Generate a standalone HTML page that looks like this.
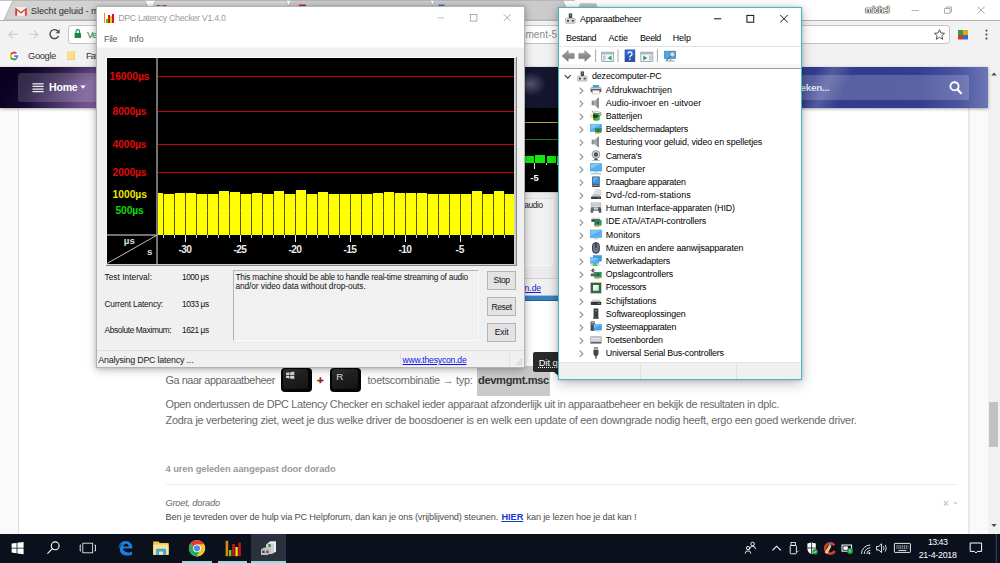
<!DOCTYPE html>
<html><head><meta charset="utf-8"><title>screenshot</title>
<style>
html,body{margin:0;padding:0;}
body{width:1000px;height:563px;overflow:hidden;position:relative;background:#fff;font-family:"Liberation Sans",sans-serif;}
.b{position:absolute;box-sizing:border-box;}
.t{position:absolute;white-space:nowrap;font-family:"Liberation Sans",sans-serif;}
svg{position:absolute;overflow:visible;}
</style></head><body>
<div class="b" style="left:0px;top:0px;width:1000px;height:20px;background:#ffffff;"></div>
<svg style="left:0;top:0" width="1000" height="21" viewBox="0 0 1000 21"><defs><linearGradient id="tg" x1="0" y1="0" x2="0" y2="1"><stop offset="0" stop-color="#d4d4d4"/><stop offset="1" stop-color="#e6e6e6"/></linearGradient></defs><path d="M146.8 19.8 L156 0 L285.5 0 L294.7 19.8 Z" fill="url(#tg)" stroke="#b0b0b0" stroke-width="0.8"/><path d="M282.3 19.8 L291.5 0 L429.8 0 L439 19.8 Z" fill="#cbcbcb" stroke="#adadad" stroke-width="0.8"/><path d="M425.8 19.8 L435 0 L562.5 0 L571.7 19.8 Z" fill="#cbcbcb" stroke="#adadad" stroke-width="0.8"/><path d="M4 19.8 L13.2 0 L144.6 0 L153.8 19.8 Z" fill="#d2d2d2" stroke="#b0b0b0" stroke-width="0.8"/><path d="M0 0.4 H575" stroke="#b4b4b4" stroke-width="0.9"/><path d="M578 9 L580 3.2 L596 3.2 L598.5 9 Z" fill="#c4c4c4"/><rect x="156.6" y="5.2" width="4" height="2.4" fill="#c62828"/><rect x="162.4" y="5.2" width="4.4" height="2.4" fill="#c62828"/><rect x="299" y="4.5" width="7" height="3" fill="#c62828"/><rect x="438.5" y="4.5" width="6" height="3" fill="#3b78d8"/></svg>
<svg style="left:14.6px;top:7px" width="12" height="9" viewBox="0 0 12 9"><rect x="0.3" y="0.3" width="11.4" height="8.4" fill="#f3f3f3"/><path d="M0.2 8.8 V0.4 L6 4.9 L11.8 0.4 V8.8 H9.9 V3.6 L6 6.7 L2.1 3.6 V8.8 Z" fill="#d8402f"/></svg>
<span class="t " style="left:30.80px;top:5px;font-size:9.3px;line-height:12.09px;color:#2f2f2f;letter-spacing:-0.074px;">Slecht geluid - m</span>
<span class="t " style="left:865.50px;top:5px;font-size:8.4px;line-height:10.92px;color:#fff;letter-spacing:-0.518px;font-weight:bold;text-shadow:0 0 0.8px #111,0 0 0.8px #111,0 0 1px #222,0 0 1.2px #333;">michel</span>
<svg style="left:900px;top:0" width="100" height="21" viewBox="0 0 100 21"><path d="M11.5 10.5 H19" stroke="#b0b0b0" stroke-width="0.9"/><path d="M44.5 8.5 H50 V13.3 H44.5 Z M46 8.5 V7 H51.5 V11.8 H50" fill="none" stroke="#999" stroke-width="0.8"/><path d="M77.8 6.7 L84.6 13.5 M84.6 6.7 L77.8 13.5" stroke="#999" stroke-width="0.9"/></svg>
<div class="b" style="left:0px;top:19.6px;width:1000px;height:47.4px;background:#f2f2f2;border-top:1.2px solid #b2b2b2;"></div>
<div class="b" style="left:67.5px;top:24.6px;width:882px;height:19.6px;background:#ffffff;border:1px solid #c6c6c6;border-radius:3px;"></div>
<svg style="left:0;top:21px" width="1000" height="27" viewBox="0 21 1000 27"><path d="M17.5 34.4 H9 M12.8 30.6 L9 34.4 L12.8 38.2" fill="none" stroke="#cfcfcf" stroke-width="1.3"/><path d="M29 34.4 H37.8 M34 30.6 L37.8 34.4 L34 38.2" fill="none" stroke="#cfcfcf" stroke-width="1.3"/><path d="M58 31.3 A4.5 4.5 0 1 0 58.6 36" fill="none" stroke="#4a4a4a" stroke-width="1.4"/><path d="M59.6 29.3 V33.2 H55.7 Z" fill="#4a4a4a"/><rect x="74.6" y="33" width="6.4" height="5" rx="0.6" fill="#1a8a3c"/><path d="M76 33 V31.4 A1.8 1.8 0 0 1 79.6 31.4 V33" fill="none" stroke="#1a8a3c" stroke-width="1.1"/><path d="M939.5 29.6 L941 33 L944.6 33.3 L941.9 35.7 L942.7 39.3 L939.5 37.4 L936.3 39.3 L937.1 35.7 L934.4 33.3 L938 33 Z" fill="none" stroke="#555" stroke-width="1"/><rect x="958" y="30" width="5" height="5" fill="#2e9e3e"/><rect x="963" y="30" width="5" height="5" fill="#e8a21c"/><rect x="958" y="35" width="5" height="4.5" fill="#d63a2a"/><rect x="963" y="35" width="5" height="4.5" fill="#2f6fc9"/><circle cx="986.5" cy="30.6" r="1.1" fill="#555"/><circle cx="986.5" cy="34.6" r="1.1" fill="#555"/><circle cx="986.5" cy="38.6" r="1.1" fill="#555"/></svg>
<span class="t " style="left:87.00px;top:29px;font-size:9.5px;line-height:12.35px;color:#1a8a3c;letter-spacing:-0.748px;">Ve</span>
<span class="t " style="left:525.40px;top:28px;font-size:10px;line-height:13.0px;color:#8a8a8a;letter-spacing:0.113px;">ment-5</span>
<svg style="left:8.6px;top:50.6px" width="10" height="10" viewBox="0 0 10 10"><circle cx="5" cy="5" r="5.2" fill="#fff"/><path d="M5 0.6 A4.4 4.4 0 0 0 1.2 2.8 L2.9 4.1 A2.4 2.4 0 0 1 5 2.6 Z" fill="#ea4335"/><path d="M1.2 2.8 A4.4 4.4 0 0 0 1.2 7.2 L2.9 5.9 A2.4 2.4 0 0 1 2.9 4.1 Z" fill="#fbbc05"/><path d="M1.2 7.2 A4.4 4.4 0 0 0 8 8.2 L6.5 6.9 A2.4 2.4 0 0 1 2.9 5.9 Z" fill="#34a853"/><path d="M8 8.2 A4.4 4.4 0 0 0 9.3 4.2 H5 V5.9 H7.3 A2.4 2.4 0 0 1 6.5 6.9 Z" fill="#4285f4"/><path d="M5 0.6 A4.4 4.4 0 0 1 8.1 1.9 L6.8 3.2 A2.4 2.4 0 0 0 5 2.6 Z" fill="#ea4335"/></svg>
<span class="t " style="left:28.00px;top:50px;font-size:9.3px;line-height:12.09px;color:#333;letter-spacing:-0.331px;">Google</span>
<div class="b" style="left:66.6px;top:50.6px;width:8.4px;height:9.8px;background:#fbe08c;border-radius:1px;border-right:1px solid #f3cf60;border-bottom:1px solid #f3cf60;"></div>
<span class="t " style="left:86.00px;top:50px;font-size:9.3px;line-height:12.09px;color:#333;letter-spacing:-0.834px;">Fav</span>
<div class="b" style="left:0px;top:66.5px;width:988px;height:467.5px;background:#fafafa;"></div>
<div class="b" style="left:17.7px;top:107px;width:952.3px;height:427px;background:#ffffff;border-left:1px solid #dedede;border-right:2px solid #e9e9e9;"></div>
<div class="b" style="left:988px;top:66.5px;width:12px;height:467.5px;background:#f1f1f1;"></div>
<div class="b" style="left:989.3px;top:402px;width:9.2px;height:45px;background:#c1c1c1;"></div>
<svg style="left:988px;top:66px" width="12" height="468" viewBox="0 0 12 468"><path d="M3.2 9.6 L6 6.6 L8.8 9.6 Z" fill="#505050"/><path d="M3.2 458 L6 461 L8.8 458 Z" fill="#505050"/></svg>
<div class="b" style="left:0px;top:66.5px;width:988px;height:41px;background:linear-gradient(90deg,#0b0326 0%,#150a33 2.5%,#3d2a5c 5%,#6b4c8c 8%,#7c5d9c 10%,#4a3a78 20%,#1f1c45 45%,#15153a 54%,#20204a 57%,#303a8a 70%,#323c8d 82%,#343e8f 93%,#4a54a0 97%,#6d77b5 100%);box-shadow:0 1px 3px rgba(0,0,0,.35);"></div>
<div class="b" style="left:0px;top:66.5px;width:100px;height:41px;background:linear-gradient(160deg,rgba(8,0,30,.85) 0%,rgba(8,0,30,.55) 30%,rgba(8,0,30,0) 62%);"></div>
<div class="b" style="left:524px;top:66.5px;width:34px;height:41px;background:radial-gradient(ellipse 16px 12px at 6px 17px,rgba(110,108,135,.75),rgba(20,20,50,0) 100%),#15152f;"></div>
<div class="b" style="left:802px;top:66.5px;width:186px;height:41px;background:linear-gradient(115deg,rgba(255,255,255,0) 0%,rgba(255,255,255,0) 8%,rgba(255,255,255,.16) 16%,rgba(255,255,255,0) 26%,rgba(255,255,255,0) 100%);"></div>
<div class="b" style="left:18.2px;top:73px;width:120px;height:29px;background:rgba(255,255,255,.16);border-radius:3px;"></div>
<svg style="left:32px;top:82px" width="14" height="12" viewBox="0 0 14 12"><path d="M0.5 1.8 H11.6 M0.5 4.4 H11.6 M0.5 7 H11.6 M0.5 9.6 H11.6" stroke="#f2eef8" stroke-width="1.25"/></svg>
<span class="t " style="left:49.00px;top:81px;font-size:10.6px;line-height:13.78px;color:#ffffff;letter-spacing:-0.237px;font-weight:bold;">Home</span>
<svg style="left:80px;top:85.4px" width="8" height="5" viewBox="0 0 8 5"><path d="M0.3 0.5 H5.7 L3 3.8 Z" fill="#fff"/></svg>
<div class="b" style="left:700px;top:75px;width:269px;height:24.6px;background:rgba(255,255,255,.19);border-radius:2px;"></div>
<span class="t " style="left:800.50px;top:82px;font-size:9.8px;line-height:12.74px;color:#dfe2f3;letter-spacing:-0.215px;font-weight:bold;">eken...</span>
<svg style="left:948px;top:80px" width="16" height="16" viewBox="0 0 16 16"><circle cx="6.5" cy="6.3" r="4.1" fill="none" stroke="#fff" stroke-width="1.9"/><path d="M9.6 9.6 L13 13.2" stroke="#fff" stroke-width="2.2" stroke-linecap="round"/></svg>
<div class="b" style="left:500px;top:107.5px;width:60px;height:85px;background:#000000;"></div>
<div class="b" style="left:500px;top:122px;width:60px;height:1px;background:#b8a64a;"></div>
<div class="b" style="left:500px;top:138.6px;width:60px;height:1.2px;background:#2c7a2c;"></div>
<div class="b" style="left:524px;top:155.8px;width:9.8px;height:7px;background:#10e810;"></div>
<div class="b" style="left:535px;top:154.7px;width:10.4px;height:8.1px;background:#10e810;"></div>
<div class="b" style="left:546.6px;top:155.8px;width:9.8px;height:7px;background:#10e810;"></div>
<div class="b" style="left:557.4px;top:155.8px;width:3px;height:7px;background:#10e810;"></div>
<div class="b" style="left:534.3px;top:162.8px;width:0.9px;height:6.6px;background:#e8e8e8;"></div>
<div class="b" style="left:545.6px;top:162.8px;width:0.8px;height:2.6px;background:#d0d0d0;"></div>
<div class="b" style="left:556.6px;top:162.8px;width:0.8px;height:2.6px;background:#d0d0d0;"></div>
<span class="t " style="left:530.30px;top:172px;font-size:9.3px;line-height:12.09px;color:#ffffff;letter-spacing:0.116px;font-weight:bold;">-5</span>
<div class="b" style="left:500px;top:192px;width:60px;height:104px;background:#ececec;border-top:1px solid #cfcfcf;"></div>
<div class="b" style="left:500px;top:198.4px;width:53px;height:68px;background:#f1f1f1;border:1px solid #dcdcdc;border-right-color:#f8f8f8;border-bottom-color:#f8f8f8;"></div>
<span class="t " style="left:524.30px;top:200px;font-size:8.3px;line-height:10.79px;color:#222;letter-spacing:-0.361px;">audio</span>
<div class="b" style="left:500px;top:277.5px;width:60px;height:18px;background:#f0f0f0;border-top:1px solid #d4d4d4;"></div>
<span class="t " style="left:524.60px;top:283px;font-size:8.6px;line-height:11.18px;color:#1a1ad8;letter-spacing:-0.059px;text-decoration:underline;">n.de</span>
<div class="b" style="left:500px;top:295.3px;width:60px;height:5.8px;background:#3c7fc0;border-top:1px solid #9fbfe0;border-bottom:1px solid #2a5f98;"></div>
<span class="t " style="left:165.50px;top:373px;font-size:10.9px;line-height:14.17px;color:#696969;letter-spacing:-0.449px;">Ga naar apparaatbeheer</span>
<div class="b" style="left:280.5px;top:368.4px;width:31.4px;height:24px;background:#050505;border-radius:4px;"></div>
<div class="b" style="left:282.9px;top:369.2px;width:25.6px;height:19.6px;border-radius:3px;background:linear-gradient(165deg,#3a3a3a 0%,#222 35%,#141414 100%);"></div>
<div class="b" style="left:329.8px;top:368.4px;width:31.4px;height:24px;background:#050505;border-radius:4px;"></div>
<div class="b" style="left:332.2px;top:369.2px;width:25.6px;height:19.6px;border-radius:3px;background:linear-gradient(165deg,#3a3a3a 0%,#222 35%,#141414 100%);"></div>
<svg style="left:286.4px;top:371.8px" width="9.2" height="6.9" viewBox="0 0 8 6"><path d="M0 0.7 L3 0.2 V2.6 H0 Z M3.6 0.15 L7.2 -0.4 V2.6 H3.6 Z M0 3.2 H3 V5.6 L0 5.1 Z M3.6 3.2 H7.2 V6.2 L3.6 5.7 Z" fill="#d8d8d8"/></svg>
<span class="t " style="left:336.20px;top:371px;font-size:9.8px;line-height:12.74px;color:#dcdcdc;">R</span>
<span class="t " style="left:317.00px;top:372px;font-size:11.6px;line-height:15.08px;color:#a31515;font-weight:bold;-webkit-text-stroke:0.3px #a31515;">+</span>
<span class="t " style="left:367.60px;top:373px;font-size:10.9px;line-height:14.17px;color:#696969;letter-spacing:-0.266px;">toetscombinatie → typ:</span>
<div class="b" style="left:476.5px;top:366px;width:73px;height:29.5px;background:#c9c9c9;"></div>
<span class="t " style="left:478.00px;top:373px;font-size:11.2px;line-height:14.56px;color:#333;letter-spacing:-0.392px;font-weight:bold;">devmgmt.msc</span>
<span class="t " style="left:165.50px;top:397px;font-size:10.9px;line-height:14.17px;color:#696969;letter-spacing:-0.331px;">Open ondertussen de DPC Latency Checker en schakel ieder apparaat afzonderlijk uit in apparaatbeheer en bekijk de resultaten in dplc.</span>
<span class="t " style="left:165.50px;top:413px;font-size:10.9px;line-height:14.17px;color:#696969;letter-spacing:-0.265px;">Zodra je verbetering ziet, weet je dus welke driver de boosdoener is en welk een update of een downgrade nodig heeft, ergo een goed werkende driver.</span>
<span class="t " style="left:165.50px;top:463px;font-size:9.4px;line-height:12.22px;color:#9a9a9a;letter-spacing:-0.080px;font-weight:bold;">4 uren geleden aangepast door dorado</span>
<div class="b" style="left:165.5px;top:483.9px;width:792px;height:1px;background:#eeeeee;"></div>
<span class="t " style="left:165.50px;top:498px;font-size:9.2px;line-height:11.96px;color:#666;letter-spacing:-0.174px;font-style:italic;">Groet, dorado</span>
<span class="t " style="left:165.50px;top:512px;font-size:9.2px;line-height:11.96px;color:#4e4e4e;letter-spacing:-0.161px;">Ben je tevreden over de hulp via PC Helpforum, dan kan je ons (vrijblijvend) steunen.</span>
<span class="t " style="left:501.40px;top:512px;font-size:9.2px;line-height:11.96px;color:#1a3ad6;letter-spacing:0.005px;font-weight:bold;text-decoration:underline;">HIER</span>
<span class="t " style="left:526.50px;top:512px;font-size:9.2px;line-height:11.96px;color:#4e4e4e;letter-spacing:-0.157px;">kan je lezen hoe je dat kan !</span>
<span class="t " style="left:943.00px;top:497px;font-size:10px;line-height:13.0px;color:#c8c8c8;font-weight:bold;">×</span>
<svg style="left:952.5px;top:502.4px" width="6" height="4" viewBox="0 0 6 4"><path d="M0.4 0.4 H4.8 L2.6 2.6 Z" fill="#c4c4c4"/></svg>
<div class="b" style="left:533px;top:352px;width:30px;height:20px;background:#2a2a2a;border-radius:2px;"></div>
<span class="t " style="left:538.80px;top:357px;font-size:9.4px;line-height:12.22px;color:#fff;letter-spacing:-0.065px;text-decoration:underline dotted;">Dit q</span>
<svg style="left:554px;top:371.5px" width="8" height="4" viewBox="0 0 8 4"><path d="M0 0 H8 L4 3.6 Z" fill="#2a2a2a"/></svg>
<div class="b" style="left:96px;top:6.2px;width:428.5px;height:361.4px;background:#f0f0f0;border:1px solid #b3b3b3;box-shadow:0 2px 9px rgba(0,0,0,.27),0 0 3px rgba(0,0,0,.15);"></div>
<div class="b" style="left:97px;top:7.2px;width:426.5px;height:39.6px;background:#ffffff;"></div>
<div class="b" style="left:103.6px;top:12.6px;width:1.9px;height:10.299999999999999px;background:#e0960c;"></div>
<div class="b" style="left:105.7px;top:19.2px;width:1.9px;height:3.6999999999999993px;background:#62c21e;"></div>
<div class="b" style="left:107.9px;top:14.8px;width:1.9px;height:8.099999999999998px;background:#d41616;"></div>
<div class="b" style="left:110.0px;top:16.4px;width:1.9px;height:6.5px;background:#e6cc18;"></div>
<div class="b" style="left:112.1px;top:14.0px;width:1.9px;height:8.899999999999999px;background:#d41616;"></div>
<span class="t " style="left:118.20px;top:13px;font-size:8.9px;line-height:11.57px;color:#9b9b9b;letter-spacing:-0.329px;">DPC Latency Checker V1.4.0</span>
<svg style="left:430px;top:8px" width="92" height="21" viewBox="430 8 92 21"><path d="M437.6 17.9 H444" stroke="#b5b5b5" stroke-width="0.9"/><rect x="470.3" y="14.5" width="6.6" height="6.6" fill="none" stroke="#9a9a9a" stroke-width="0.8"/><path d="M503.7 14.2 L510.7 21.2 M510.7 14.2 L503.7 21.2" stroke="#9a9a9a" stroke-width="0.85"/></svg>
<span class="t " style="left:104.10px;top:34px;font-size:8.9px;line-height:11.57px;color:#5a5a5a;letter-spacing:-0.335px;">File</span>
<span class="t " style="left:128.90px;top:34px;font-size:8.9px;line-height:11.57px;color:#5a5a5a;letter-spacing:0.014px;">Info</span>
<div class="b" style="left:97px;top:46.8px;width:426.5px;height:0.8px;background:#f8f8f8;"></div>
<div class="b" style="left:105.6px;top:56.6px;width:411.6px;height:209.3px;background:#858585;"></div>
<div class="b" style="left:105.6px;top:56.6px;width:410.5px;height:208.2px;background:#fbfbfb;"></div>
<div class="b" style="left:106.9px;top:57.9px;width:409.2px;height:206.9px;background:#cdcdcd;"></div>
<div class="b" style="left:106.9px;top:57.9px;width:407.4px;height:205.9px;background:#000000;"></div>
<div class="b" style="left:158px;top:75.95px;width:356.3px;height:1.15px;background:#cc0000;"></div>
<div class="b" style="left:158px;top:110.95px;width:356.3px;height:1.15px;background:#cc0000;"></div>
<div class="b" style="left:158px;top:143.95px;width:356.3px;height:1.15px;background:#cc0000;"></div>
<div class="b" style="left:158px;top:171.85px;width:356.3px;height:1.15px;background:#cc0000;"></div>
<div class="b" style="left:157.3px;top:193.3px;width:5.85px;height:41.29999999999998px;background:#ffff00;"></div>
<div class="b" style="left:164.05px;top:193.7px;width:10.1px;height:40.900000000000006px;background:#ffff00;"></div>
<div class="b" style="left:175.05px;top:192.7px;width:10.1px;height:41.900000000000006px;background:#ffff00;"></div>
<div class="b" style="left:186.05px;top:192.7px;width:10.1px;height:41.900000000000006px;background:#ffff00;"></div>
<div class="b" style="left:197.05px;top:193.5px;width:10.1px;height:41.099999999999994px;background:#ffff00;"></div>
<div class="b" style="left:208.05px;top:193.5px;width:10.1px;height:41.099999999999994px;background:#ffff00;"></div>
<div class="b" style="left:219.05px;top:191.2px;width:10.1px;height:43.400000000000006px;background:#ffff00;"></div>
<div class="b" style="left:230.05px;top:192.0px;width:10.1px;height:42.599999999999994px;background:#ffff00;"></div>
<div class="b" style="left:241.05px;top:193.5px;width:10.1px;height:41.099999999999994px;background:#ffff00;"></div>
<div class="b" style="left:252.05px;top:192.7px;width:10.1px;height:41.900000000000006px;background:#ffff00;"></div>
<div class="b" style="left:263.05px;top:194.2px;width:10.1px;height:40.400000000000006px;background:#ffff00;"></div>
<div class="b" style="left:274.05px;top:190.5px;width:10.1px;height:44.099999999999994px;background:#ffff00;"></div>
<div class="b" style="left:285.05px;top:194.2px;width:10.1px;height:40.400000000000006px;background:#ffff00;"></div>
<div class="b" style="left:296.05px;top:190.0px;width:10.1px;height:44.599999999999994px;background:#ffff00;"></div>
<div class="b" style="left:307.05px;top:193.5px;width:10.1px;height:41.099999999999994px;background:#ffff00;"></div>
<div class="b" style="left:318.05px;top:192.0px;width:10.1px;height:42.599999999999994px;background:#ffff00;"></div>
<div class="b" style="left:329.05px;top:193.5px;width:10.1px;height:41.099999999999994px;background:#ffff00;"></div>
<div class="b" style="left:340.05px;top:193.5px;width:10.1px;height:41.099999999999994px;background:#ffff00;"></div>
<div class="b" style="left:351.05px;top:193.5px;width:10.1px;height:41.099999999999994px;background:#ffff00;"></div>
<div class="b" style="left:362.05px;top:193.5px;width:10.1px;height:41.099999999999994px;background:#ffff00;"></div>
<div class="b" style="left:373.05px;top:192.7px;width:10.1px;height:41.900000000000006px;background:#ffff00;"></div>
<div class="b" style="left:384.05px;top:192.0px;width:10.1px;height:42.599999999999994px;background:#ffff00;"></div>
<div class="b" style="left:395.05px;top:193.3px;width:10.1px;height:41.29999999999998px;background:#ffff00;"></div>
<div class="b" style="left:406.05px;top:193.3px;width:10.1px;height:41.29999999999998px;background:#ffff00;"></div>
<div class="b" style="left:417.05px;top:193.3px;width:10.1px;height:41.29999999999998px;background:#ffff00;"></div>
<div class="b" style="left:428.05px;top:194.2px;width:10.1px;height:40.400000000000006px;background:#ffff00;"></div>
<div class="b" style="left:439.05px;top:193.5px;width:10.1px;height:41.099999999999994px;background:#ffff00;"></div>
<div class="b" style="left:450.05px;top:193.5px;width:10.1px;height:41.099999999999994px;background:#ffff00;"></div>
<div class="b" style="left:461.05px;top:193.5px;width:10.1px;height:41.099999999999994px;background:#ffff00;"></div>
<div class="b" style="left:472.05px;top:190.5px;width:10.1px;height:44.099999999999994px;background:#ffff00;"></div>
<div class="b" style="left:483.05px;top:194.2px;width:10.1px;height:40.400000000000006px;background:#ffff00;"></div>
<div class="b" style="left:494.05px;top:191.2px;width:10.1px;height:43.400000000000006px;background:#ffff00;"></div>
<div class="b" style="left:505.05px;top:193.5px;width:9.2px;height:41.099999999999994px;background:#ffff00;"></div>
<div class="b" style="left:163.05px;top:194.4px;width:0.9px;height:40.2px;background:#555500;"></div>
<div class="b" style="left:174.05px;top:194.4px;width:0.9px;height:40.2px;background:#555500;"></div>
<div class="b" style="left:185.05px;top:194.4px;width:0.9px;height:40.2px;background:#555500;"></div>
<div class="b" style="left:196.05px;top:194.4px;width:0.9px;height:40.2px;background:#555500;"></div>
<div class="b" style="left:207.05px;top:194.4px;width:0.9px;height:40.2px;background:#555500;"></div>
<div class="b" style="left:218.05px;top:194.4px;width:0.9px;height:40.2px;background:#555500;"></div>
<div class="b" style="left:229.05px;top:194.4px;width:0.9px;height:40.2px;background:#555500;"></div>
<div class="b" style="left:240.05px;top:194.4px;width:0.9px;height:40.2px;background:#555500;"></div>
<div class="b" style="left:251.05px;top:194.4px;width:0.9px;height:40.2px;background:#555500;"></div>
<div class="b" style="left:262.05px;top:194.4px;width:0.9px;height:40.2px;background:#555500;"></div>
<div class="b" style="left:273.05px;top:194.4px;width:0.9px;height:40.2px;background:#555500;"></div>
<div class="b" style="left:284.05px;top:194.4px;width:0.9px;height:40.2px;background:#555500;"></div>
<div class="b" style="left:295.05px;top:194.4px;width:0.9px;height:40.2px;background:#555500;"></div>
<div class="b" style="left:306.05px;top:194.4px;width:0.9px;height:40.2px;background:#555500;"></div>
<div class="b" style="left:317.05px;top:194.4px;width:0.9px;height:40.2px;background:#555500;"></div>
<div class="b" style="left:328.05px;top:194.4px;width:0.9px;height:40.2px;background:#555500;"></div>
<div class="b" style="left:339.05px;top:194.4px;width:0.9px;height:40.2px;background:#555500;"></div>
<div class="b" style="left:350.05px;top:194.4px;width:0.9px;height:40.2px;background:#555500;"></div>
<div class="b" style="left:361.05px;top:194.4px;width:0.9px;height:40.2px;background:#555500;"></div>
<div class="b" style="left:372.05px;top:194.4px;width:0.9px;height:40.2px;background:#555500;"></div>
<div class="b" style="left:383.05px;top:194.4px;width:0.9px;height:40.2px;background:#555500;"></div>
<div class="b" style="left:394.05px;top:194.4px;width:0.9px;height:40.2px;background:#555500;"></div>
<div class="b" style="left:405.05px;top:194.4px;width:0.9px;height:40.2px;background:#555500;"></div>
<div class="b" style="left:416.05px;top:194.4px;width:0.9px;height:40.2px;background:#555500;"></div>
<div class="b" style="left:427.05px;top:194.4px;width:0.9px;height:40.2px;background:#555500;"></div>
<div class="b" style="left:438.05px;top:194.4px;width:0.9px;height:40.2px;background:#555500;"></div>
<div class="b" style="left:449.05px;top:194.4px;width:0.9px;height:40.2px;background:#555500;"></div>
<div class="b" style="left:460.05px;top:194.4px;width:0.9px;height:40.2px;background:#555500;"></div>
<div class="b" style="left:471.05px;top:194.4px;width:0.9px;height:40.2px;background:#555500;"></div>
<div class="b" style="left:482.05px;top:194.4px;width:0.9px;height:40.2px;background:#555500;"></div>
<div class="b" style="left:493.05px;top:194.4px;width:0.9px;height:40.2px;background:#555500;"></div>
<div class="b" style="left:504.05px;top:194.4px;width:0.9px;height:40.2px;background:#555500;"></div>
<div class="b" style="left:163.0px;top:210.0px;width:1px;height:0.9px;background:#4fa000;"></div>
<div class="b" style="left:174.0px;top:210.0px;width:1px;height:0.9px;background:#4fa000;"></div>
<div class="b" style="left:185.0px;top:210.0px;width:1px;height:0.9px;background:#4fa000;"></div>
<div class="b" style="left:196.0px;top:210.0px;width:1px;height:0.9px;background:#4fa000;"></div>
<div class="b" style="left:207.0px;top:210.0px;width:1px;height:0.9px;background:#4fa000;"></div>
<div class="b" style="left:218.0px;top:210.0px;width:1px;height:0.9px;background:#4fa000;"></div>
<div class="b" style="left:229.0px;top:210.0px;width:1px;height:0.9px;background:#4fa000;"></div>
<div class="b" style="left:240.0px;top:210.0px;width:1px;height:0.9px;background:#4fa000;"></div>
<div class="b" style="left:251.0px;top:210.0px;width:1px;height:0.9px;background:#4fa000;"></div>
<div class="b" style="left:262.0px;top:210.0px;width:1px;height:0.9px;background:#4fa000;"></div>
<div class="b" style="left:273.0px;top:210.0px;width:1px;height:0.9px;background:#4fa000;"></div>
<div class="b" style="left:284.0px;top:210.0px;width:1px;height:0.9px;background:#4fa000;"></div>
<div class="b" style="left:295.0px;top:210.0px;width:1px;height:0.9px;background:#4fa000;"></div>
<div class="b" style="left:306.0px;top:210.0px;width:1px;height:0.9px;background:#4fa000;"></div>
<div class="b" style="left:317.0px;top:210.0px;width:1px;height:0.9px;background:#4fa000;"></div>
<div class="b" style="left:328.0px;top:210.0px;width:1px;height:0.9px;background:#4fa000;"></div>
<div class="b" style="left:339.0px;top:210.0px;width:1px;height:0.9px;background:#4fa000;"></div>
<div class="b" style="left:350.0px;top:210.0px;width:1px;height:0.9px;background:#4fa000;"></div>
<div class="b" style="left:361.0px;top:210.0px;width:1px;height:0.9px;background:#4fa000;"></div>
<div class="b" style="left:372.0px;top:210.0px;width:1px;height:0.9px;background:#4fa000;"></div>
<div class="b" style="left:383.0px;top:210.0px;width:1px;height:0.9px;background:#4fa000;"></div>
<div class="b" style="left:394.0px;top:210.0px;width:1px;height:0.9px;background:#4fa000;"></div>
<div class="b" style="left:405.0px;top:210.0px;width:1px;height:0.9px;background:#4fa000;"></div>
<div class="b" style="left:416.0px;top:210.0px;width:1px;height:0.9px;background:#4fa000;"></div>
<div class="b" style="left:427.0px;top:210.0px;width:1px;height:0.9px;background:#4fa000;"></div>
<div class="b" style="left:438.0px;top:210.0px;width:1px;height:0.9px;background:#4fa000;"></div>
<div class="b" style="left:449.0px;top:210.0px;width:1px;height:0.9px;background:#4fa000;"></div>
<div class="b" style="left:460.0px;top:210.0px;width:1px;height:0.9px;background:#4fa000;"></div>
<div class="b" style="left:471.0px;top:210.0px;width:1px;height:0.9px;background:#4fa000;"></div>
<div class="b" style="left:482.0px;top:210.0px;width:1px;height:0.9px;background:#4fa000;"></div>
<div class="b" style="left:493.0px;top:210.0px;width:1px;height:0.9px;background:#4fa000;"></div>
<div class="b" style="left:504.0px;top:210.0px;width:1px;height:0.9px;background:#4fa000;"></div>
<div class="b" style="left:156.2px;top:58px;width:1.8px;height:205.8px;background:#727272;"></div>
<div class="b" style="left:107px;top:234.1px;width:50.8px;height:1.8px;background:#727272;"></div>
<svg style="left:107px;top:234px" width="51" height="30" viewBox="0 0 51 30"><path d="M0.2 29.4 L50.4 0.9" stroke="#d6d6d6" stroke-width="0.9"/></svg>
<div class="b" style="left:163.0px;top:235.2px;width:1px;height:3px;background:#cfcfcf;"></div>
<div class="b" style="left:174.0px;top:235.2px;width:1px;height:3px;background:#cfcfcf;"></div>
<div class="b" style="left:185.0px;top:235.2px;width:1px;height:6.6px;background:#f0f0f0;"></div>
<div class="b" style="left:196.0px;top:235.2px;width:1px;height:3px;background:#cfcfcf;"></div>
<div class="b" style="left:207.0px;top:235.2px;width:1px;height:3px;background:#cfcfcf;"></div>
<div class="b" style="left:218.0px;top:235.2px;width:1px;height:3px;background:#cfcfcf;"></div>
<div class="b" style="left:229.0px;top:235.2px;width:1px;height:3px;background:#cfcfcf;"></div>
<div class="b" style="left:240.0px;top:235.2px;width:1px;height:6.6px;background:#f0f0f0;"></div>
<div class="b" style="left:251.0px;top:235.2px;width:1px;height:3px;background:#cfcfcf;"></div>
<div class="b" style="left:262.0px;top:235.2px;width:1px;height:3px;background:#cfcfcf;"></div>
<div class="b" style="left:273.0px;top:235.2px;width:1px;height:3px;background:#cfcfcf;"></div>
<div class="b" style="left:284.0px;top:235.2px;width:1px;height:3px;background:#cfcfcf;"></div>
<div class="b" style="left:295.0px;top:235.2px;width:1px;height:6.6px;background:#f0f0f0;"></div>
<div class="b" style="left:306.0px;top:235.2px;width:1px;height:3px;background:#cfcfcf;"></div>
<div class="b" style="left:317.0px;top:235.2px;width:1px;height:3px;background:#cfcfcf;"></div>
<div class="b" style="left:328.0px;top:235.2px;width:1px;height:3px;background:#cfcfcf;"></div>
<div class="b" style="left:339.0px;top:235.2px;width:1px;height:3px;background:#cfcfcf;"></div>
<div class="b" style="left:350.0px;top:235.2px;width:1px;height:6.6px;background:#f0f0f0;"></div>
<div class="b" style="left:361.0px;top:235.2px;width:1px;height:3px;background:#cfcfcf;"></div>
<div class="b" style="left:372.0px;top:235.2px;width:1px;height:3px;background:#cfcfcf;"></div>
<div class="b" style="left:383.0px;top:235.2px;width:1px;height:3px;background:#cfcfcf;"></div>
<div class="b" style="left:394.0px;top:235.2px;width:1px;height:3px;background:#cfcfcf;"></div>
<div class="b" style="left:405.0px;top:235.2px;width:1px;height:6.6px;background:#f0f0f0;"></div>
<div class="b" style="left:416.0px;top:235.2px;width:1px;height:3px;background:#cfcfcf;"></div>
<div class="b" style="left:427.0px;top:235.2px;width:1px;height:3px;background:#cfcfcf;"></div>
<div class="b" style="left:438.0px;top:235.2px;width:1px;height:3px;background:#cfcfcf;"></div>
<div class="b" style="left:449.0px;top:235.2px;width:1px;height:3px;background:#cfcfcf;"></div>
<div class="b" style="left:460.0px;top:235.2px;width:1px;height:6.6px;background:#f0f0f0;"></div>
<div class="b" style="left:471.0px;top:235.2px;width:1px;height:3px;background:#cfcfcf;"></div>
<div class="b" style="left:482.0px;top:235.2px;width:1px;height:3px;background:#cfcfcf;"></div>
<div class="b" style="left:493.0px;top:235.2px;width:1px;height:3px;background:#cfcfcf;"></div>
<div class="b" style="left:504.0px;top:235.2px;width:1px;height:3px;background:#cfcfcf;"></div>
<span class="t " style="left:109.50px;top:70px;font-size:10.3px;line-height:13.39px;color:#e00a0a;letter-spacing:-0.043px;font-weight:bold;">16000µs</span>
<span class="t " style="left:112.50px;top:105px;font-size:10.3px;line-height:13.39px;color:#e00a0a;letter-spacing:-0.096px;font-weight:bold;">8000µs</span>
<span class="t " style="left:112.50px;top:138px;font-size:10.3px;line-height:13.39px;color:#e00a0a;letter-spacing:-0.096px;font-weight:bold;">4000µs</span>
<span class="t " style="left:112.50px;top:166px;font-size:10.3px;line-height:13.39px;color:#e00a0a;letter-spacing:-0.096px;font-weight:bold;">2000µs</span>
<span class="t " style="left:112.50px;top:188px;font-size:10.3px;line-height:13.39px;color:#e6e600;letter-spacing:-0.012px;font-weight:bold;">1000µs</span>
<span class="t " style="left:115.50px;top:204px;font-size:10.3px;line-height:13.39px;color:#0ad80a;letter-spacing:-0.129px;font-weight:bold;">500µs</span>
<span class="t " style="left:123.80px;top:235px;font-size:9.8px;line-height:12.74px;color:#dedede;letter-spacing:0.152px;font-weight:bold;">µs</span>
<span class="t " style="left:147.00px;top:246px;font-size:9.8px;line-height:12.74px;color:#dedede;font-weight:bold;">s</span>
<span class="t " style="left:178.40px;top:243px;font-size:10.2px;line-height:13.26px;color:#ececec;letter-spacing:-0.580px;font-weight:bold;">-30</span>
<span class="t " style="left:233.40px;top:243px;font-size:10.2px;line-height:13.26px;color:#ececec;letter-spacing:-0.580px;font-weight:bold;">-25</span>
<span class="t " style="left:288.40px;top:243px;font-size:10.2px;line-height:13.26px;color:#ececec;letter-spacing:-0.580px;font-weight:bold;">-20</span>
<span class="t " style="left:343.40px;top:243px;font-size:10.2px;line-height:13.26px;color:#ececec;letter-spacing:-0.580px;font-weight:bold;">-15</span>
<span class="t " style="left:398.40px;top:243px;font-size:10.2px;line-height:13.26px;color:#ececec;letter-spacing:-0.580px;font-weight:bold;">-10</span>
<span class="t " style="left:455.50px;top:243px;font-size:10.2px;line-height:13.26px;color:#ececec;letter-spacing:-0.134px;font-weight:bold;">-5</span>
<span class="t " style="left:104.50px;top:272px;font-size:8.3px;line-height:10.79px;color:#111;letter-spacing:0.032px;">Test Interval:</span>
<span class="t " style="left:182.00px;top:272px;font-size:8.3px;line-height:10.79px;color:#111;letter-spacing:-0.429px;">1000 µs</span>
<span class="t " style="left:104.50px;top:299px;font-size:8.3px;line-height:10.79px;color:#111;letter-spacing:-0.178px;">Current Latency:</span>
<span class="t " style="left:182.00px;top:299px;font-size:8.3px;line-height:10.79px;color:#111;letter-spacing:-0.429px;">1033 µs</span>
<span class="t " style="left:104.50px;top:325px;font-size:8.3px;line-height:10.79px;color:#111;letter-spacing:-0.363px;">Absolute Maximum:</span>
<span class="t " style="left:182.00px;top:325px;font-size:8.3px;line-height:10.79px;color:#111;letter-spacing:-0.429px;">1621 µs</span>
<div class="b" style="left:232.8px;top:270.3px;width:246.2px;height:71px;background:#f1f1f1;border:1px solid #b2b2b2;border-right-color:#fbfbfb;border-bottom-color:#fbfbfb;"></div>
<span class="t " style="left:235.40px;top:272px;font-size:8.3px;line-height:10.79px;color:#111;letter-spacing:-0.222px;">This machine should be able to handle real-time streaming of audio</span>
<span class="t " style="left:235.40px;top:281px;font-size:8.3px;line-height:10.79px;color:#111;letter-spacing:-0.059px;">and/or video data without drop-outs.</span>
<div class="b" style="left:487.4px;top:270.5px;width:28.4px;height:19px;background:#e3e3e3;border:1px solid #b4b4b4;"></div>
<span class="t " style="left:493.60px;top:275px;font-size:8.5px;line-height:11.05px;color:#111;letter-spacing:-0.371px;">Stop</span>
<div class="b" style="left:487.4px;top:297.3px;width:28.4px;height:19px;background:#e3e3e3;border:1px solid #b4b4b4;"></div>
<span class="t " style="left:491.60px;top:302px;font-size:8.5px;line-height:11.05px;color:#111;letter-spacing:-0.441px;">Reset</span>
<div class="b" style="left:487.4px;top:322.6px;width:28.4px;height:19px;background:#e3e3e3;border:1px solid #b4b4b4;"></div>
<span class="t " style="left:494.85px;top:327px;font-size:8.5px;line-height:11.05px;color:#111;letter-spacing:-0.167px;">Exit</span>
<div class="b" style="left:97px;top:350.4px;width:426.5px;height:1px;background:#dedede;"></div>
<div class="b" style="left:400px;top:352.6px;width:1px;height:13px;background:#e0e0e0;"></div>
<div class="b" style="left:508.6px;top:352.6px;width:1px;height:13px;background:#e0e0e0;"></div>
<span class="t " style="left:98.20px;top:355px;font-size:8.9px;line-height:11.57px;color:#222;letter-spacing:-0.197px;">Analysing DPC latency ...</span>
<span class="t " style="left:402.60px;top:355px;font-size:8.6px;line-height:11.18px;color:#1414e6;letter-spacing:-0.195px;text-decoration:underline;">www.thesycon.de</span>
<svg style="left:515px;top:358px" width="8" height="8" viewBox="0 0 8 8"><g fill="#b9b9b9"><rect x="5.6" y="1.2" width="1.2" height="1.2"/><rect x="5.6" y="3.4" width="1.2" height="1.2"/><rect x="3.4" y="3.4" width="1.2" height="1.2"/><rect x="5.6" y="5.6" width="1.2" height="1.2"/><rect x="3.4" y="5.6" width="1.2" height="1.2"/><rect x="1.2" y="5.6" width="1.2" height="1.2"/></g></svg>
<div class="b" style="left:557.6px;top:7.3px;width:244.6px;height:373px;background:#ffffff;border:1.3px solid #46b6c3;box-shadow:0 3px 12px rgba(0,0,0,.28),0 0 4px rgba(0,0,0,.16);"></div>
<svg style="left:564.6px;top:12.8px" width="10.8" height="10.8" viewBox="0 0 16 16"><rect x="5.6" y="0.6" width="5" height="7" fill="#4a4a4a"/><rect x="7.3" y="2" width="1.6" height="2.4" fill="#2fc14a"/><rect x="1" y="8" width="14" height="7.2" rx="0.8" fill="#e2e2e2" stroke="#8e8e8e" stroke-width="0.9"/><rect x="3" y="10.2" width="3" height="2.6" fill="#3a3a3a"/><rect x="10" y="10.2" width="3" height="2.6" fill="#3a3a3a"/></svg>
<span class="t " style="left:580.00px;top:14px;font-size:8.9px;line-height:11.57px;color:#000;letter-spacing:-0.159px;">Apparaatbeheer</span>
<svg style="left:700px;top:8px" width="100" height="22" viewBox="700 8 100 22"><path d="M714 18.8 H721.3" stroke="#111" stroke-width="1"/><rect x="746.9" y="15.4" width="6.8" height="6.8" fill="none" stroke="#111" stroke-width="1"/><path d="M780.3 15 L787.7 22.4 M787.7 15 L780.3 22.4" stroke="#111" stroke-width="1"/></svg>
<span class="t " style="left:566.10px;top:33px;font-size:8.9px;line-height:11.57px;color:#000;letter-spacing:-0.351px;">Bestand</span>
<span class="t " style="left:608.50px;top:33px;font-size:8.9px;line-height:11.57px;color:#000;letter-spacing:-0.057px;">Actie</span>
<span class="t " style="left:640.00px;top:33px;font-size:8.9px;line-height:11.57px;color:#000;letter-spacing:-0.352px;">Beeld</span>
<span class="t " style="left:672.70px;top:33px;font-size:8.9px;line-height:11.57px;color:#000;letter-spacing:-0.001px;">Help</span>
<div class="b" style="left:558.9px;top:46.2px;width:242.0px;height:1px;background:#e3e3e3;"></div>
<svg style="left:558px;top:47px" width="244" height="20" viewBox="558 47 244 20"><defs><linearGradient id="ag" x1="0" y1="0" x2="0" y2="1"><stop offset="0" stop-color="#a2a2a2"/><stop offset="1" stop-color="#787878"/></linearGradient><linearGradient id="hg" x1="0" y1="0" x2="0" y2="1"><stop offset="0" stop-color="#3d74dc"/><stop offset="1" stop-color="#1f47a6"/></linearGradient></defs><path d="M562 56 L568.2 50.6 V53.4 H574.2 V58.6 H568.2 V61.4 Z" fill="url(#ag)" stroke="#7c7c7c" stroke-width="0.5"/><path d="M591 56 L584.8 50.6 V53.4 H578.8 V58.6 H584.8 V61.4 Z" fill="url(#ag)" stroke="#7c7c7c" stroke-width="0.5"/><path d="M595.6 49.4 V62.2 M618 49.4 V62.2 M657.4 49.4 V62.2" stroke="#9c9c9c" stroke-width="0.9"/><rect x="601.7" y="52.2" width="12" height="9.2" fill="#f4f6f8" stroke="#8f98a2" stroke-width="0.8"/><rect x="601.7" y="52.2" width="12" height="2.2" fill="#aab6c4"/><rect x="602.8" y="55.4" width="2.8" height="5" fill="#c3ccd6"/><path d="M611.6 55.4 V60.4 L607.4 57.9 Z" fill="#2fb044"/><rect x="625" y="49.9" width="9.9" height="11.8" fill="url(#hg)" stroke="#1e3f8e" stroke-width="0.6"/><path d="M628 53.8 A2 2 0 1 1 630.7 55.7 Q629.9 56.3 629.9 57.5" fill="none" stroke="#fff" stroke-width="1.25"/><rect x="629.2" y="58.6" width="1.4" height="1.5" fill="#fff"/><rect x="640.8" y="52.2" width="12" height="9.2" fill="#f4f6f8" stroke="#8f98a2" stroke-width="0.8"/><rect x="640.8" y="52.2" width="12" height="2.2" fill="#aab6c4"/><rect x="649" y="55.4" width="2.8" height="5" fill="#c3ccd6"/><path d="M643.2 55.4 V60.4 L647.4 57.9 Z" fill="#2fb044"/><rect x="664.4" y="51.2" width="11.2" height="7.2" fill="#49a9ea" stroke="#2f86c6" stroke-width="0.7"/><path d="M667.4 61 H674.6" stroke="#8ea2b4" stroke-width="1.1"/><path d="M670.6 58.6 V60.6" stroke="#8ea2b4" stroke-width="1.4"/><circle cx="672.4" cy="54.4" r="2.7" fill="#bfe2f8" stroke="#5a6a78" stroke-width="0.8"/><path d="M670.4 56.4 L665.8 61.2" stroke="#5a6a78" stroke-width="1.1"/></svg>
<div class="b" style="left:558.9px;top:64.4px;width:242.0px;height:3.4px;background:#f6f6f6;"></div>
<div class="b" style="left:558.9px;top:67.6px;width:242.0px;height:1.9px;background:#9a9a9a;"></div>
<div class="b" style="left:558.9px;top:362px;width:242.0px;height:17.0px;background:#f0f0f0;border-top:1px solid #e6e6e6;"></div>
<div class="b" style="left:639.5px;top:363px;width:1px;height:16px;background:#e0e0e0;"></div>
<div class="b" style="left:736px;top:363px;width:1px;height:16px;background:#e0e0e0;"></div>
<svg style="left:564px;top:74.0px" width="8" height="6" viewBox="0 0 8 6"><path d="M0.8 1.2 L3.8 4.2 L6.8 1.2" fill="none" stroke="#3c3c3c" stroke-width="1.15"/></svg>
<svg style="left:576.6px;top:70.80000000000001px" width="10.6" height="10.6" viewBox="0 0 16 16"><rect x="5.6" y="0.6" width="5" height="7" fill="#4a4a4a"/><rect x="7.3" y="2" width="1.6" height="2.4" fill="#2fc14a"/><rect x="1" y="8" width="14" height="7.2" rx="0.8" fill="#e2e2e2" stroke="#8e8e8e" stroke-width="0.9"/><rect x="3" y="10.2" width="3" height="2.6" fill="#3a3a3a"/><rect x="10" y="10.2" width="3" height="2.6" fill="#3a3a3a"/></svg>
<span class="t " style="left:592.00px;top:71px;font-size:8.9px;line-height:11.57px;color:#000;letter-spacing:-0.135px;">dezecomputer-PC</span>
<svg style="left:579.4px;top:86.69px" width="5" height="8" viewBox="0 0 5 8"><path d="M0.7 0.7 L3.8 3.8 L0.7 6.9" fill="none" stroke="#8e8e8e" stroke-width="1.15"/></svg>
<svg style="left:590.1px;top:83.69px" width="11.9" height="11.9" viewBox="0 0 16 16"><rect x="3.6" y="1.4" width="8.8" height="3.6" fill="#4aa3e6"/><rect x="6.4" y="1.8" width="2.6" height="1.8" fill="#36b64a"/><rect x="0.8" y="4.6" width="14.4" height="6.4" rx="0.8" fill="#5e5e5e"/><rect x="1.4" y="5" width="13.2" height="1.6" fill="#d8d8d8"/><rect x="3.6" y="8.6" width="8.8" height="4.8" fill="#fdfdfd" stroke="#a8a8a8" stroke-width="0.6"/></svg>
<span class="t " style="left:605.80px;top:85px;font-size:8.9px;line-height:11.57px;color:#000;letter-spacing:0.032px;">Afdrukwachtrijen</span>
<svg style="left:579.4px;top:99.88px" width="5" height="8" viewBox="0 0 5 8"><path d="M0.7 0.7 L3.8 3.8 L0.7 6.9" fill="none" stroke="#8e8e8e" stroke-width="1.15"/></svg>
<svg style="left:590.1px;top:96.88px" width="11.9" height="11.9" viewBox="0 0 16 16"><path d="M2.4 5 H6 L11.8 0.6 V15.4 L6 11 H2.4 Z" fill="#a4a8ab"/><path d="M9.6 2.2 L11.8 0.6 V15.4 L9.6 13.8 Z" fill="#7e8387"/><path d="M2.4 5 H4.6 V11 H2.4 Z" fill="#84898d"/></svg>
<span class="t " style="left:605.80px;top:98px;font-size:8.9px;line-height:11.57px;color:#000;letter-spacing:0.051px;">Audio-invoer en -uitvoer</span>
<svg style="left:579.4px;top:113.07px" width="5" height="8" viewBox="0 0 5 8"><path d="M0.7 0.7 L3.8 3.8 L0.7 6.9" fill="none" stroke="#8e8e8e" stroke-width="1.15"/></svg>
<svg style="left:590.1px;top:110.07px" width="11.9" height="11.9" viewBox="0 0 16 16"><ellipse cx="8.8" cy="3.6" rx="4.2" ry="2" fill="#ece9f4" stroke="#9e96b4" stroke-width="0.7"/><path d="M4.6 4 H13 V12.4 A4.2 2.2 0 0 1 4.6 12.4 Z" fill="#35b83c"/><path d="M4.6 4 H7 V14 A4 2 0 0 1 4.6 12.4 Z" fill="#238a2a"/><path d="M4 6.2 H9.6 L11.6 8.2 L9.6 10.4 H4 Z" fill="#343434"/><path d="M0.6 7 H4 M0.6 9.4 H4" stroke="#d9a216" stroke-width="1.1"/><path d="M11.6 8.2 C15 8.6 15.4 5 13.6 3" fill="none" stroke="#3a3a3a" stroke-width="1"/><path d="M2.6 0.8 L4.4 3.6" stroke="#444" stroke-width="0.8"/></svg>
<span class="t " style="left:605.80px;top:111px;font-size:8.9px;line-height:11.57px;color:#000;letter-spacing:-0.120px;">Batterijen</span>
<svg style="left:579.4px;top:126.26px" width="5" height="8" viewBox="0 0 5 8"><path d="M0.7 0.7 L3.8 3.8 L0.7 6.9" fill="none" stroke="#8e8e8e" stroke-width="1.15"/></svg>
<svg style="left:590.1px;top:123.26px" width="11.9" height="11.9" viewBox="0 0 16 16"><rect x="0.6" y="1.6" width="14.8" height="9.6" fill="#4fb0f0" stroke="#2a86c9" stroke-width="0.7"/><path d="M0.8 1.8 H15.2 L0.8 8.6 Z" fill="#7cc7f6"/><rect x="7" y="7.4" width="8" height="5.4" fill="#2f9459" stroke="#1c6a3c" stroke-width="0.5"/><rect x="9.4" y="8.8" width="3" height="2.4" fill="#1d5c38"/><rect x="7" y="12.8" width="6" height="1.6" fill="#f0a020"/></svg>
<span class="t " style="left:605.80px;top:124px;font-size:8.9px;line-height:11.57px;color:#000;letter-spacing:-0.219px;">Beeldschermadapters</span>
<svg style="left:579.4px;top:139.45px" width="5" height="8" viewBox="0 0 5 8"><path d="M0.7 0.7 L3.8 3.8 L0.7 6.9" fill="none" stroke="#8e8e8e" stroke-width="1.15"/></svg>
<svg style="left:590.1px;top:136.45px" width="11.9" height="11.9" viewBox="0 0 16 16"><path d="M2.4 5 H6 L11.8 0.6 V15.4 L6 11 H2.4 Z" fill="#a4a8ab"/><path d="M9.6 2.2 L11.8 0.6 V15.4 L9.6 13.8 Z" fill="#7e8387"/><path d="M2.4 5 H4.6 V11 H2.4 Z" fill="#84898d"/></svg>
<span class="t " style="left:605.80px;top:137px;font-size:8.9px;line-height:11.57px;color:#000;letter-spacing:-0.118px;">Besturing voor geluid, video en spelletjes</span>
<svg style="left:579.4px;top:152.64px" width="5" height="8" viewBox="0 0 5 8"><path d="M0.7 0.7 L3.8 3.8 L0.7 6.9" fill="none" stroke="#8e8e8e" stroke-width="1.15"/></svg>
<svg style="left:590.1px;top:149.64px" width="11.9" height="11.9" viewBox="0 0 16 16"><circle cx="8" cy="6" r="5.2" fill="#e6e6e8" stroke="#707074" stroke-width="1"/><circle cx="8" cy="6" r="3" fill="#4a4e56"/><circle cx="8" cy="6" r="1.5" fill="#2a62c8"/><path d="M6.2 11 L5.4 13.6 H10.6 L9.8 11 Z" fill="#55575b"/><path d="M3 14.2 H13" stroke="#9a9a9a" stroke-width="1"/></svg>
<span class="t " style="left:605.80px;top:151px;font-size:8.9px;line-height:11.57px;color:#000;letter-spacing:-0.275px;">Camera's</span>
<svg style="left:579.4px;top:165.83px" width="5" height="8" viewBox="0 0 5 8"><path d="M0.7 0.7 L3.8 3.8 L0.7 6.9" fill="none" stroke="#8e8e8e" stroke-width="1.15"/></svg>
<svg style="left:590.1px;top:162.83px" width="11.9" height="11.9" viewBox="0 0 16 16"><rect x="0.6" y="0.8" width="14.8" height="10" fill="#4fb0f0" stroke="#2a86c9" stroke-width="0.7"/><path d="M0.8 1 H15.2 L0.8 8.2 Z" fill="#7cc7f6"/><path d="M5.6 12.2 H10.4" stroke="#b5c4d2" stroke-width="1.2"/><path d="M1 14.4 H15" stroke="#a9bccb" stroke-width="1.6"/></svg>
<span class="t " style="left:605.80px;top:164px;font-size:8.9px;line-height:11.57px;color:#000;letter-spacing:0.053px;">Computer</span>
<svg style="left:579.4px;top:179.02px" width="5" height="8" viewBox="0 0 5 8"><path d="M0.7 0.7 L3.8 3.8 L0.7 6.9" fill="none" stroke="#8e8e8e" stroke-width="1.15"/></svg>
<svg style="left:590.1px;top:176.02px" width="11.9" height="11.9" viewBox="0 0 16 16"><rect x="3" y="0.8" width="10" height="14" rx="0.8" fill="#3c3c40"/><rect x="4" y="1.8" width="8" height="8.8" fill="#2f9cf2"/><path d="M4 1.8 H12 L4 8 Z" fill="#58b4f8"/><rect x="4" y="11.6" width="8" height="1.6" fill="#9a9a9a"/></svg>
<span class="t " style="left:605.80px;top:177px;font-size:8.9px;line-height:11.57px;color:#000;letter-spacing:-0.237px;">Draagbare apparaten</span>
<svg style="left:579.4px;top:192.21px" width="5" height="8" viewBox="0 0 5 8"><path d="M0.7 0.7 L3.8 3.8 L0.7 6.9" fill="none" stroke="#8e8e8e" stroke-width="1.15"/></svg>
<svg style="left:590.1px;top:189.21px" width="11.9" height="11.9" viewBox="0 0 16 16"><circle cx="10.4" cy="5" r="4.6" fill="#dfe2e5" stroke="#b4b8bc" stroke-width="0.6"/><circle cx="10.4" cy="5" r="1.3" fill="#f8f8f8" stroke="#b0b0b0" stroke-width="0.5"/><path d="M1.8 10.2 L4 6.6 H13 L14.6 10.2 Z" fill="#c4c6c9"/><rect x="1.4" y="10" width="13.4" height="3.6" rx="0.6" fill="#3a3a3a"/><rect x="10.8" y="11.2" width="1.8" height="1.3" fill="#3fd24a"/></svg>
<span class="t " style="left:605.80px;top:190px;font-size:8.9px;line-height:11.57px;color:#000;letter-spacing:0.136px;">Dvd-/cd-rom-stations</span>
<svg style="left:579.4px;top:205.40px" width="5" height="8" viewBox="0 0 5 8"><path d="M0.7 0.7 L3.8 3.8 L0.7 6.9" fill="none" stroke="#8e8e8e" stroke-width="1.15"/></svg>
<svg style="left:590.1px;top:202.40px" width="11.9" height="11.9" viewBox="0 0 16 16"><rect x="1.6" y="1.2" width="13" height="6.4" fill="#e9e9ea" stroke="#8c8c90" stroke-width="0.7"/><path d="M2.6 3 H13.6 M2.6 5 H13.6" stroke="#a8a8ac" stroke-width="0.8"/><path d="M0.8 14.6 V9.6 Q0.8 6.6 3.6 6.6 H5.4 V10 H10.4 V6.6 H12.6 Q15.2 6.6 15.2 9.6 V14.6 H11.6 V11.8 H4.4 V14.6 Z" fill="#5d6772"/><circle cx="4.4" cy="7.6" r="1.3" fill="#3fa0ea"/><rect x="7.2" y="6.6" width="1.2" height="3" fill="#e8761c"/><rect x="12.4" y="9" width="2.2" height="4.4" fill="#3d4650"/></svg>
<span class="t " style="left:605.80px;top:203px;font-size:8.9px;line-height:11.57px;color:#000;letter-spacing:-0.099px;">Human Interface-apparaten (HID)</span>
<svg style="left:579.4px;top:218.59px" width="5" height="8" viewBox="0 0 5 8"><path d="M0.7 0.7 L3.8 3.8 L0.7 6.9" fill="none" stroke="#8e8e8e" stroke-width="1.15"/></svg>
<svg style="left:590.1px;top:215.59px" width="11.9" height="11.9" viewBox="0 0 16 16"><rect x="2" y="2" width="11.6" height="3.4" rx="0.8" fill="#d9dadc"/><rect x="1.8" y="4.4" width="12" height="3.4" rx="0.5" fill="#3c3c3e"/><rect x="6" y="5.6" width="9" height="7" fill="#2f9459" stroke="#1c6a3c" stroke-width="0.5"/><rect x="8.6" y="7.4" width="3.6" height="3" fill="#1d5c38"/><rect x="11.2" y="4.8" width="1.6" height="1.2" fill="#3fd24a"/><rect x="6.6" y="13" width="6" height="1.6" fill="#f0a020"/></svg>
<span class="t " style="left:605.80px;top:216px;font-size:8.9px;line-height:11.57px;color:#000;letter-spacing:-0.124px;">IDE ATA/ATAPI-controllers</span>
<svg style="left:579.4px;top:231.78px" width="5" height="8" viewBox="0 0 5 8"><path d="M0.7 0.7 L3.8 3.8 L0.7 6.9" fill="none" stroke="#8e8e8e" stroke-width="1.15"/></svg>
<svg style="left:590.1px;top:228.78px" width="11.9" height="11.9" viewBox="0 0 16 16"><rect x="0.6" y="1.4" width="14.8" height="9.8" fill="#4fb0f0" stroke="#2a86c9" stroke-width="0.7"/><path d="M0.8 1.6 H15.2 L0.8 8.8 Z" fill="#7cc7f6"/><path d="M7 11.4 H9 V12.8 H7 Z" fill="#b5c4d2"/><path d="M4.6 13.2 H11.4" stroke="#a9bccb" stroke-width="1.1"/></svg>
<span class="t " style="left:605.80px;top:230px;font-size:8.9px;line-height:11.57px;color:#000;letter-spacing:0.059px;">Monitors</span>
<svg style="left:579.4px;top:244.97px" width="5" height="8" viewBox="0 0 5 8"><path d="M0.7 0.7 L3.8 3.8 L0.7 6.9" fill="none" stroke="#8e8e8e" stroke-width="1.15"/></svg>
<svg style="left:590.1px;top:241.97px" width="11.9" height="11.9" viewBox="0 0 16 16"><rect x="3.4" y="0.8" width="9.2" height="14.4" rx="4.6" fill="#6c7a8c" stroke="#2c3036" stroke-width="1.2"/><path d="M8 1.4 V8" stroke="#2c3036" stroke-width="1.7"/><path d="M4.6 9 Q8 11 11.4 9" fill="none" stroke="#525e6e" stroke-width="0.6"/></svg>
<span class="t " style="left:605.80px;top:243px;font-size:8.9px;line-height:11.57px;color:#000;letter-spacing:-0.172px;">Muizen en andere aanwijsapparaten</span>
<svg style="left:579.4px;top:258.16px" width="5" height="8" viewBox="0 0 5 8"><path d="M0.7 0.7 L3.8 3.8 L0.7 6.9" fill="none" stroke="#8e8e8e" stroke-width="1.15"/></svg>
<svg style="left:590.1px;top:255.16px" width="11.9" height="11.9" viewBox="0 0 16 16"><rect x="4.4" y="0.8" width="11" height="7.4" fill="#3d9be6" stroke="#2a7fc6" stroke-width="0.6"/><rect x="1" y="3.6" width="11" height="7.4" fill="#55b2f2" stroke="#2a86c9" stroke-width="0.6"/><path d="M1.2 3.8 H11.8 L1.2 9 Z" fill="#7cc7f6"/><rect x="5" y="11" width="3.6" height="1.6" fill="#35b84a"/><rect x="0.8" y="12.6" width="13.6" height="2" fill="#d6d8da"/><rect x="3.6" y="12.6" width="6.4" height="2" fill="#35b84a"/></svg>
<span class="t " style="left:605.80px;top:256px;font-size:8.9px;line-height:11.57px;color:#000;letter-spacing:-0.185px;">Netwerkadapters</span>
<svg style="left:579.4px;top:271.35px" width="5" height="8" viewBox="0 0 5 8"><path d="M0.7 0.7 L3.8 3.8 L0.7 6.9" fill="none" stroke="#8e8e8e" stroke-width="1.15"/></svg>
<svg style="left:590.1px;top:268.35px" width="11.9" height="11.9" viewBox="0 0 16 16"><path d="M4.4 0.6 L1.6 3.4 L4.4 6.2 L5.4 5.2 L3.6 3.4 L5.4 1.6 Z M4 3.4 H7.6" fill="#3c3c3c" stroke="#3c3c3c" stroke-width="0.6"/><rect x="1" y="7.4" width="6.6" height="3.8" rx="0.4" fill="#5a5a5c"/><rect x="6" y="5.6" width="9.2" height="7" fill="#2f9459" stroke="#1c6a3c" stroke-width="0.5"/><rect x="8.8" y="7.4" width="3.6" height="3" fill="#1d5c38"/><rect x="6.6" y="13" width="6" height="1.6" fill="#f0a020"/><path d="M15.4 6 V14" stroke="#9aa" stroke-width="0.6"/></svg>
<span class="t " style="left:605.80px;top:269px;font-size:8.9px;line-height:11.57px;color:#000;letter-spacing:-0.097px;">Opslagcontrollers</span>
<svg style="left:579.4px;top:284.54px" width="5" height="8" viewBox="0 0 5 8"><path d="M0.7 0.7 L3.8 3.8 L0.7 6.9" fill="none" stroke="#8e8e8e" stroke-width="1.15"/></svg>
<svg style="left:590.1px;top:281.54px" width="11.9" height="11.9" viewBox="0 0 16 16"><rect x="0.9" y="0.9" width="14.2" height="14.2" fill="#2b6a4e" stroke="#d8a13a" stroke-width="0.9" stroke-dasharray="1.1 0.9"/><rect x="1.8" y="1.8" width="12.4" height="12.4" fill="#2b6a4e"/><rect x="4.2" y="4.2" width="7.6" height="7.6" fill="#e6e6e6"/><path d="M4.2 4.2 H11.8 L4.2 11.8 Z" fill="#f6f6f6"/></svg>
<span class="t " style="left:605.80px;top:282px;font-size:8.9px;line-height:11.57px;color:#000;letter-spacing:-0.421px;">Processors</span>
<svg style="left:579.4px;top:297.73px" width="5" height="8" viewBox="0 0 5 8"><path d="M0.7 0.7 L3.8 3.8 L0.7 6.9" fill="none" stroke="#8e8e8e" stroke-width="1.15"/></svg>
<svg style="left:590.1px;top:294.73px" width="11.9" height="11.9" viewBox="0 0 16 16"><path d="M1.6 9.6 L3.4 6 H12.8 L14.6 9.6 Z" fill="#d4d6d8"/><rect x="1.2" y="9.2" width="13.8" height="4.2" rx="0.6" fill="#363638"/><rect x="10.8" y="10.6" width="2" height="1.4" fill="#3fd24a"/></svg>
<span class="t " style="left:605.80px;top:296px;font-size:8.9px;line-height:11.57px;color:#000;letter-spacing:-0.124px;">Schijfstations</span>
<svg style="left:579.4px;top:310.92px" width="5" height="8" viewBox="0 0 5 8"><path d="M0.7 0.7 L3.8 3.8 L0.7 6.9" fill="none" stroke="#8e8e8e" stroke-width="1.15"/></svg>
<svg style="left:590.1px;top:307.92px" width="11.9" height="11.9" viewBox="0 0 16 16"><rect x="4.8" y="0.6" width="6.4" height="12" fill="#3e3e40"/><rect x="7" y="2.8" width="2.2" height="1.6" fill="#38e046"/><path d="M4 14.6 L4.8 12.4 H11.2 L12 14.6 Z" fill="#2e2e30"/></svg>
<span class="t " style="left:605.80px;top:309px;font-size:8.9px;line-height:11.57px;color:#000;letter-spacing:-0.133px;">Softwareoplossingen</span>
<svg style="left:579.4px;top:324.11px" width="5" height="8" viewBox="0 0 5 8"><path d="M0.7 0.7 L3.8 3.8 L0.7 6.9" fill="none" stroke="#8e8e8e" stroke-width="1.15"/></svg>
<svg style="left:590.1px;top:321.11px" width="11.9" height="11.9" viewBox="0 0 16 16"><rect x="0.8" y="0.6" width="5.6" height="12.6" fill="#47474a"/><rect x="1.6" y="1.6" width="4" height="1.2" fill="#cfcfcf"/><rect x="1.6" y="3.6" width="4" height="1.2" fill="#9c9c9c"/><rect x="1.4" y="0.6" width="1.4" height="0.9" fill="#38d046"/><rect x="5" y="4.6" width="10.6" height="7.6" fill="#3fa2ee" stroke="#2a86c9" stroke-width="0.5"/><path d="M5.2 4.8 H15.4 L5.2 10 Z" fill="#6dbdf5"/><path d="M8 13.4 H12.6" stroke="#a9bccb" stroke-width="1"/></svg>
<span class="t " style="left:605.80px;top:322px;font-size:8.9px;line-height:11.57px;color:#000;letter-spacing:-0.263px;">Systeemapparaten</span>
<svg style="left:579.4px;top:337.30px" width="5" height="8" viewBox="0 0 5 8"><path d="M0.7 0.7 L3.8 3.8 L0.7 6.9" fill="none" stroke="#8e8e8e" stroke-width="1.15"/></svg>
<svg style="left:590.1px;top:334.30px" width="11.9" height="11.9" viewBox="0 0 16 16"><rect x="0.6" y="3.4" width="14.8" height="7.6" rx="0.6" fill="#c9cbcd" stroke="#8a8c8e" stroke-width="0.6"/><path d="M2 6 H14" stroke="#f0f0f0" stroke-width="1.4" stroke-dasharray="1.3 0.7"/><path d="M2 8.2 H14" stroke="#ededed" stroke-width="1.2" stroke-dasharray="1.8 0.6"/><rect x="0.6" y="11" width="14.8" height="1.8" fill="#4a4c50"/></svg>
<span class="t " style="left:605.80px;top:335px;font-size:8.9px;line-height:11.57px;color:#000;letter-spacing:-0.129px;">Toetsenborden</span>
<svg style="left:579.4px;top:350.49px" width="5" height="8" viewBox="0 0 5 8"><path d="M0.7 0.7 L3.8 3.8 L0.7 6.9" fill="none" stroke="#8e8e8e" stroke-width="1.15"/></svg>
<svg style="left:590.1px;top:347.49px" width="11.9" height="11.9" viewBox="0 0 16 16"><rect x="5.6" y="0.6" width="4.8" height="3.6" fill="#e0e0e0" stroke="#555" stroke-width="0.7"/><rect x="6.6" y="1.6" width="1" height="1.2" fill="#555"/><rect x="8.4" y="1.6" width="1" height="1.2" fill="#555"/><path d="M4.6 4.2 H11.4 V9 Q11.4 11.4 9 12 V15.4 H7 V12 Q4.6 11.4 4.6 9 Z" fill="#47474a"/></svg>
<span class="t " style="left:605.80px;top:348px;font-size:8.9px;line-height:11.57px;color:#000;letter-spacing:-0.183px;">Universal Serial Bus-controllers</span>
<div class="b" style="left:0px;top:533.6px;width:1000px;height:29.4px;background:#0b101d;"></div>
<div class="b" style="left:251px;top:533.6px;width:35.4px;height:29.4px;background:#2a303d;"></div>
<div class="b" style="left:182px;top:561.3px;width:29.80000000000001px;height:1.7px;background:#8edbea;"></div>
<div class="b" style="left:218px;top:561.3px;width:29.19999999999999px;height:1.7px;background:#8edbea;"></div>
<div class="b" style="left:251px;top:561.3px;width:35.39999999999998px;height:1.7px;background:#8edbea;"></div>
<svg style="left:0;top:534px" width="300" height="29" viewBox="0 534 300 29"><path d="M11.6 543.6 L16.6 542.9 V547.7 H11.6 Z M17.4 542.8 L23.6 541.9 V547.7 H17.4 Z M11.6 548.5 H16.6 V553.3 L11.6 552.6 Z M17.4 548.5 H23.6 V554.3 L17.4 553.4 Z" fill="#fff"/><circle cx="55.2" cy="545.8" r="3.9" fill="none" stroke="#fff" stroke-width="1.1"/><path d="M52.4 548.6 L47.4 553.6" stroke="#fff" stroke-width="1.2"/><rect x="82.8" y="543.2" width="9.8" height="9.6" fill="none" stroke="#f0f0f0" stroke-width="0.85"/><path d="M81 545 H80.2 V551 H81 M94.6 545 H95.4 V551 H94.6" fill="none" stroke="#fff" stroke-width="0.9"/><path d="M118.6 549.6 C118.4 544.2 121.6 541 125.6 541 C130 541 132.6 544.4 132.4 548.6 H123.2 C123.4 551.4 126 552.4 128 552.4 C129.6 552.4 131 552 132 551.4 V554.4 C130.8 555.2 129 555.6 127.2 555.6 C122.6 555.6 119.6 552.8 119.8 548.4 C120 546.2 121.4 544.6 123 543.6 C120.6 544.4 119.2 546.6 118.6 549.6 Z M123.3 546.6 H128.6 C128.6 544.8 127.6 543.8 126 543.8 C124.6 543.8 123.6 544.8 123.3 546.6 Z" fill="#1a7fe0"/><path d="M153.2 541.6 H158.6 L159.8 543 H168.6 V554.8 H153.2 Z" fill="#f0c648"/><rect x="153.2" y="544.6" width="15.4" height="10.2" fill="#fbe394"/><path d="M156.2 554.9 V548.8 H166 V554.9 H163.2 V551.4 H159 V554.9 Z" fill="#38a4ee"/><circle cx="197" cy="548.3" r="8.1" fill="#fff"/><path d="M197 548.3 L189.98 544.25 A8.1 8.1 0 0 1 204.02 544.25 Z" fill="#e33b2e"/><path d="M197 540.2 A8.1 8.1 0 0 1 204.02 544.25 L197 544.25 Z" fill="#e33b2e"/><path d="M189.98 544.25 A8.1 8.1 0 0 0 197 556.4 L200.6 550.3 L197 548.3 Z" fill="#2da94f"/><path d="M204.02 544.25 A8.1 8.1 0 0 1 197 556.4 L200.6 550.3 L197 548.3 L197 544.25 Z" fill="#fcc31e"/><circle cx="197" cy="548.3" r="3.9" fill="#fff"/><circle cx="197" cy="548.3" r="3.1" fill="#4a8af4"/><rect x="225.6" y="540.8" width="2.6" height="15.4" fill="#d98a10"/><rect x="229" y="550" width="2.4" height="6.2" fill="#5ad418"/><rect x="232.2" y="544" width="2.6" height="12.2" fill="#d01818"/><rect x="235.4" y="547" width="2.4" height="9.2" fill="#f2e010"/><rect x="238.4" y="542.6" width="2.4" height="13.6" fill="#d01818"/><path d="M266 544.6 L270 541.4 H276 V551.4 L272 554 H266 Z" fill="#cfcfcf"/><path d="M270 541.4 H276 V551.4 L274 552.6 V543.6 H268 Z" fill="#ececec"/><rect x="268.4" y="544" width="2.2" height="3" fill="#2c8a3a"/><path d="M261 549.4 L264 547.4 H270.6 V553 L267.6 555 H261 Z" fill="#bdbdbd"/><rect x="262.4" y="550.6" width="2.2" height="2.4" fill="#3a3a3a"/><rect x="266.4" y="550.6" width="2" height="2.4" fill="#4a4a4a"/></svg>
<svg style="left:740px;top:534px" width="260" height="29" viewBox="740 534 260 29"><circle cx="752.6" cy="544" r="1.8" fill="none" stroke="#fff" stroke-width="0.9"/><path d="M749.6 549.6 A3 3 0 0 1 755.6 549" fill="none" stroke="#fff" stroke-width="0.9"/><circle cx="748" cy="548" r="1.6" fill="none" stroke="#fff" stroke-width="0.9"/><path d="M745.2 553.6 A2.8 2.8 0 0 1 750.8 553.6" fill="none" stroke="#fff" stroke-width="0.9"/><path d="M772.4 550.4 L776.6 546.2 L780.8 550.4" fill="none" stroke="#fff" stroke-width="1.1"/><rect x="791" y="542.4" width="4.6" height="3" fill="none" stroke="#fff" stroke-width="0.8"/><rect x="790.2" y="545.4" width="6.2" height="8.4" rx="1" fill="none" stroke="#fff" stroke-width="0.9"/><path d="M797 552.4 L798.6 550.6" stroke="#ccc" stroke-width="0.9"/><path d="M807.4 543.6 L811.6 542.4 L815.8 543.6 V548.4 Q815.8 552.4 811.6 554.2 Q807.4 552.4 807.4 548.4 Z" fill="#fff"/><path d="M811.6 542.4 V554.2 M807.4 548 H815.8" stroke="#0b101d" stroke-width="0.8"/><circle cx="815" cy="551.8" r="2.7" fill="#1fa24a"/><path d="M813.6 551.8 L814.6 552.8 L816.4 550.8" fill="none" stroke="#fff" stroke-width="0.7"/><path d="M834.4 545.2 A5.2 5.2 0 1 0 834.8 551" fill="none" stroke="#e03a2a" stroke-width="2.6"/><path d="M829.6 544 L824.6 552.4 L827.4 554 L831.4 546.2 Z" fill="#e8c88a"/><path d="M829.2 542.8 L832 544.6" stroke="#3a78d0" stroke-width="1.6"/><rect x="842" y="545" width="9.6" height="6.2" fill="none" stroke="#fff" stroke-width="1"/><rect x="843.4" y="546.4" width="4.4" height="3.4" fill="#fff"/><circle cx="850" cy="551" r="2.9" fill="#1fa24a"/><path d="M850 549.4 V552.4" stroke="#fff" stroke-width="0.7"/><path d="M861.4 554 A9 9 0 0 1 870.4 545" fill="none" stroke="#d8d8d8" stroke-width="1"/><path d="M864.2 554 A6.2 6.2 0 0 1 870.4 547.8" fill="none" stroke="#d8d8d8" stroke-width="1"/><path d="M866.8 554 A3.6 3.6 0 0 1 870.4 550.4" fill="none" stroke="#d8d8d8" stroke-width="1"/><circle cx="869.4" cy="553.2" r="1" fill="#fff"/><path d="M876.6 546.4 H878.8 L881.6 543.8 V552.6 L878.8 550 H876.6 Z" fill="none" stroke="#fff" stroke-width="0.9"/><path d="M883.4 546.2 Q884.8 548.2 883.4 550.2 M885.2 544.8 Q887.4 548.2 885.2 551.6" fill="none" stroke="#fff" stroke-width="0.8"/><rect x="894.4" y="543.4" width="16" height="9" rx="0.6" fill="none" stroke="#fff" stroke-width="0.9"/><path d="M896.4 546 H908.4 M896.4 548 H908.4" stroke="#fff" stroke-width="0.9" stroke-dasharray="1.2 0.7"/><path d="M898.4 550.4 H906.4" stroke="#fff" stroke-width="0.9"/><path d="M970.2 543 H981.6 V551.4 H977.4 L975.9 553 L974.4 551.4 H970.2 Z" fill="none" stroke="#fff" stroke-width="1"/><path d="M996.3 534 V563" stroke="#5a6070" stroke-width="0.7"/></svg>
<span class="t " style="left:927.95px;top:537px;font-size:8.9px;line-height:11.57px;color:#fff;letter-spacing:-0.554px;">13:43</span>
<span class="t " style="left:918.70px;top:550px;font-size:8.9px;line-height:11.57px;color:#fff;letter-spacing:-0.286px;">21-4-2018</span>
</body></html>
